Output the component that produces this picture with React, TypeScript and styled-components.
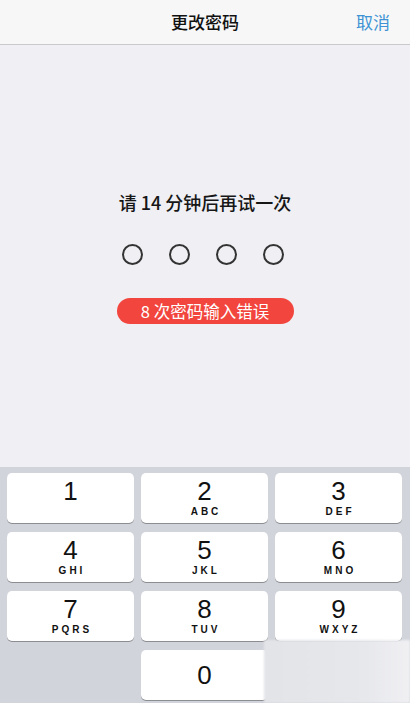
import React from "react";
import styled, { createGlobalStyle } from "styled-components";

const GlobalStyle = createGlobalStyle`
  html, body {
    margin: 0;
    padding: 0;
    background: #efeff4;
  }
  body {
    font-family: "Liberation Sans", "Noto Sans CJK SC", sans-serif;
  }
`;

const Screen = styled.div`
  width: 410px;
  height: 703px;
  display: flex;
  flex-direction: column;
  background: #efeff4;
  position: relative;
  overflow: hidden;
`;

const Header = styled.header`
  height: 42px;
  flex-shrink: 0;
  display: flex;
  align-items: center;
  justify-content: center;
  position: relative;
  background: #f7f7f7;
  border-bottom: 1px solid #c9c9cc;
  padding-bottom: 2px;
`;

const Title = styled.h1`
  margin: 0;
  font-family: "Noto Sans CJK SC", sans-serif;
  font-size: 17px;
  font-weight: 500;
  color: #111;
`;

const Cancel = styled.button`
  position: absolute;
  right: 20px;
  top: 0;
  height: 100%;
  border: none;
  background: none;
  padding: 0 0 2px;
  font-family: "Noto Sans CJK SC", sans-serif;
  font-size: 17px;
  color: #3d93d4;
`;

const Body = styled.main`
  flex: 1;
  display: flex;
  flex-direction: column;
  align-items: center;
  padding-top: 144px;
`;

const Message = styled.p`
  margin: 0;
  font-family: "Noto Sans CJK SC", sans-serif;
  font-size: 18px;
  font-weight: 500;
  color: #161616;
  line-height: 26px;
`;

const Dots = styled.div`
  display: flex;
  gap: 26px;
  margin-top: 29px;
  margin-left: -4px;
`;

const Dot = styled.span`
  width: 17px;
  height: 17px;
  border-radius: 50%;
  border: 2px solid #333;
`;

const ErrorPill = styled.div`
  margin-top: 33px;
  height: 26px;
  width: 177px;
  border-radius: 13px;
  background: #f2453d;
  color: #fff;
  display: flex;
  align-items: center;
  justify-content: center;
  font-family: "Noto Sans CJK SC", sans-serif;
  font-size: 16.5px;
`;

const Keyboard = styled.div`
  flex-shrink: 0;
  background: #d1d4da;
  padding: 6px 8px 3px 7px;
  display: grid;
  grid-template-columns: repeat(3, 127px);
  grid-auto-rows: 50px;
  column-gap: 7px;
  row-gap: 9px;
`;

const Key = styled.button<{ $blank?: boolean }>`
  border: none;
  padding: 0;
  border-radius: 5px;
  background: ${(p) => (p.$blank ? "transparent" : "#fff")};
  box-shadow: ${(p) => (p.$blank ? "none" : "0 1px 0 #8b8d91")};
  display: flex;
  flex-direction: column;
  align-items: center;
  justify-content: center;
  color: #111;
`;

const Digit = styled.span`
  font-family: "Liberation Sans", sans-serif;
  font-size: 26px;
  line-height: 26px;
  font-weight: 400;
`;

const Letters = styled.span`
  font-family: "Liberation Sans", sans-serif;
  font-size: 10px;
  font-weight: 700;
  letter-spacing: 3px;
  margin-right: -3px;
  line-height: 12px;
  margin-top: 2px;
`;

const Watermark = styled.div`
  position: absolute;
  left: 264px;
  top: 640px;
  width: 146px;
  height: 63px;
  background: linear-gradient(90deg, #e3e4e8 0%, #e7e8ec 70%, #f0f0f3 100%);
  filter: blur(1px);
`;

const keys = [
  { d: "1", l: "" },
  { d: "2", l: "ABC" },
  { d: "3", l: "DEF" },
  { d: "4", l: "GHI" },
  { d: "5", l: "JKL" },
  { d: "6", l: "MNO" },
  { d: "7", l: "PQRS" },
  { d: "8", l: "TUV" },
  { d: "9", l: "WXYZ" },
];

export default function App() {
  return (
    <>
      <GlobalStyle />
      <Screen>
        <Header>
          <Title>更改密码</Title>
          <Cancel>取消</Cancel>
        </Header>
        <Body>
          <Message>请 14 分钟后再试一次</Message>
          <Dots>
            <Dot />
            <Dot />
            <Dot />
            <Dot />
          </Dots>
          <ErrorPill>8 次密码输入错误</ErrorPill>
        </Body>
        <Keyboard>
          {keys.map((k) => (
            <Key key={k.d}>
              <Digit>{k.d}</Digit>
              <Letters>{k.l || "\u00a0"}</Letters>
            </Key>
          ))}
          <Key $blank />
          <Key>
            <Digit>0</Digit>
          </Key>
          <Key $blank />
        </Keyboard>
        <Watermark />
      </Screen>
    </>
  );
}
